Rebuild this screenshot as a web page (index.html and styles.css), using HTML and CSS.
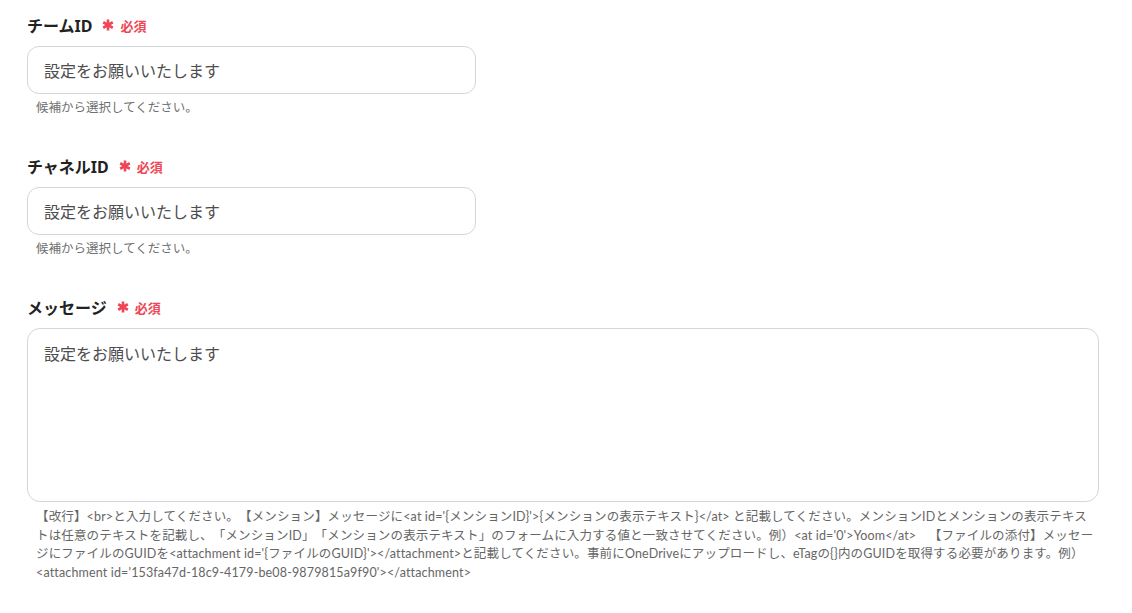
FILE: index.html
```html
<!DOCTYPE html>
<html lang="ja">
<head>
  <meta charset="UTF-8">
  <title>メッセージ設定</title>
  <link rel="stylesheet" href="styles.css">
</head>
<body>
  <form class="settings-form">
    <div class="field">
      <label class="field-label">チームID
        <span class="req">
          <svg class="req-mark" viewBox="0 0 12 12"><path d="M6 0.5v11M1.2 3.25l9.6 5.5M1.2 8.75l9.6-5.5"/></svg>必須
        </span>
      </label>
      <div class="input-box">設定をお願いいたします</div>
      <p class="hint">候補から選択してください。</p>
    </div>

    <div class="field">
      <label class="field-label">チャネルID
        <span class="req">
          <svg class="req-mark" viewBox="0 0 12 12"><path d="M6 0.5v11M1.2 3.25l9.6 5.5M1.2 8.75l9.6-5.5"/></svg>必須
        </span>
      </label>
      <div class="input-box">設定をお願いいたします</div>
      <p class="hint">候補から選択してください。</p>
    </div>

    <div class="field">
      <label class="field-label">メッセージ
        <span class="req">
          <svg class="req-mark" viewBox="0 0 12 12"><path d="M6 0.5v11M1.2 3.25l9.6 5.5M1.2 8.75l9.6-5.5"/></svg>必須
        </span>
      </label>
      <div class="input-box textarea-box">設定をお願いいたします</div>
      <p class="help">【改行】&lt;br&gt;と入力してください。【メンション】メッセージに&lt;at id='{メンションID}'&gt;{メンションの表示テキスト}&lt;/at&gt; と記載してください。メンションIDとメンションの表示テキストは任意のテキストを記載し、「メンションID」「メンションの表示テキスト」のフォームに入力する値と一致させてください。例）&lt;at id='0'&gt;Yoom&lt;/at&gt;　【ファイルの添付】メッセージにファイルのGUIDを&lt;attachment id='{ファイルのGUID}'&gt;&lt;/attachment&gt;と記載してください。事前にOneDriveにアップロードし、eTagの{}内のGUIDを取得する必要があります。例）&lt;attachment id='153fa47d-18c9-4179-be08-9879815a9f90'&gt;&lt;/attachment&gt;</p>
    </div>
  </form>
</body>
</html>
```

FILE: styles.css
```css
body {
  margin: 0;
  padding: 13px 33px 0 27px;
  font-family: "Noto Sans", "Noto Sans CJK JP", sans-serif;
  color: #222;
  background: #fff;
  text-spacing-trim: space-all;
}

.settings-form {
  display: flex;
  flex-direction: column;
  gap: 37px;
}

.field {
  display: flex;
  flex-direction: column;
}

.field-label {
  display: flex;
  align-items: center;
  gap: 10px;
  height: 24px;
  font-size: 16px;
  font-weight: 700;
  color: #222;
}

.req {
  display: inline-flex;
  align-items: center;
  gap: 6px;
  font-size: 13px;
  font-weight: 700;
  color: #ee4656;
}

.req-mark {
  width: 12px;
  height: 12px;
  fill: none;
  stroke: #ee4656;
  stroke-width: 2.6;
}

.input-box {
  margin-top: 9px;
  width: 449px;
  height: 48px;
  box-sizing: border-box;
  padding: 0 16px;
  border: 1px solid #d3d6db;
  border-radius: 12px;
  display: flex;
  align-items: center;
  font-size: 16px;
  color: #4d4d4d;
}

.textarea-box {
  width: auto;
  height: 174px;
  align-items: flex-start;
  padding-top: 12px;
  border-radius: 13px;
}

.hint {
  margin: 5px 0 0 9px;
  font-size: 12.5px;
  line-height: 18px;
  color: #707070;
}

.help {
  margin: 6px 0 0 9px;
  font-family: Lato, "Noto Sans CJK JP", sans-serif;
  font-size: 12.5px;
  letter-spacing: 0.15px;
  line-height: 18.5px;
  color: #666;
}
```
